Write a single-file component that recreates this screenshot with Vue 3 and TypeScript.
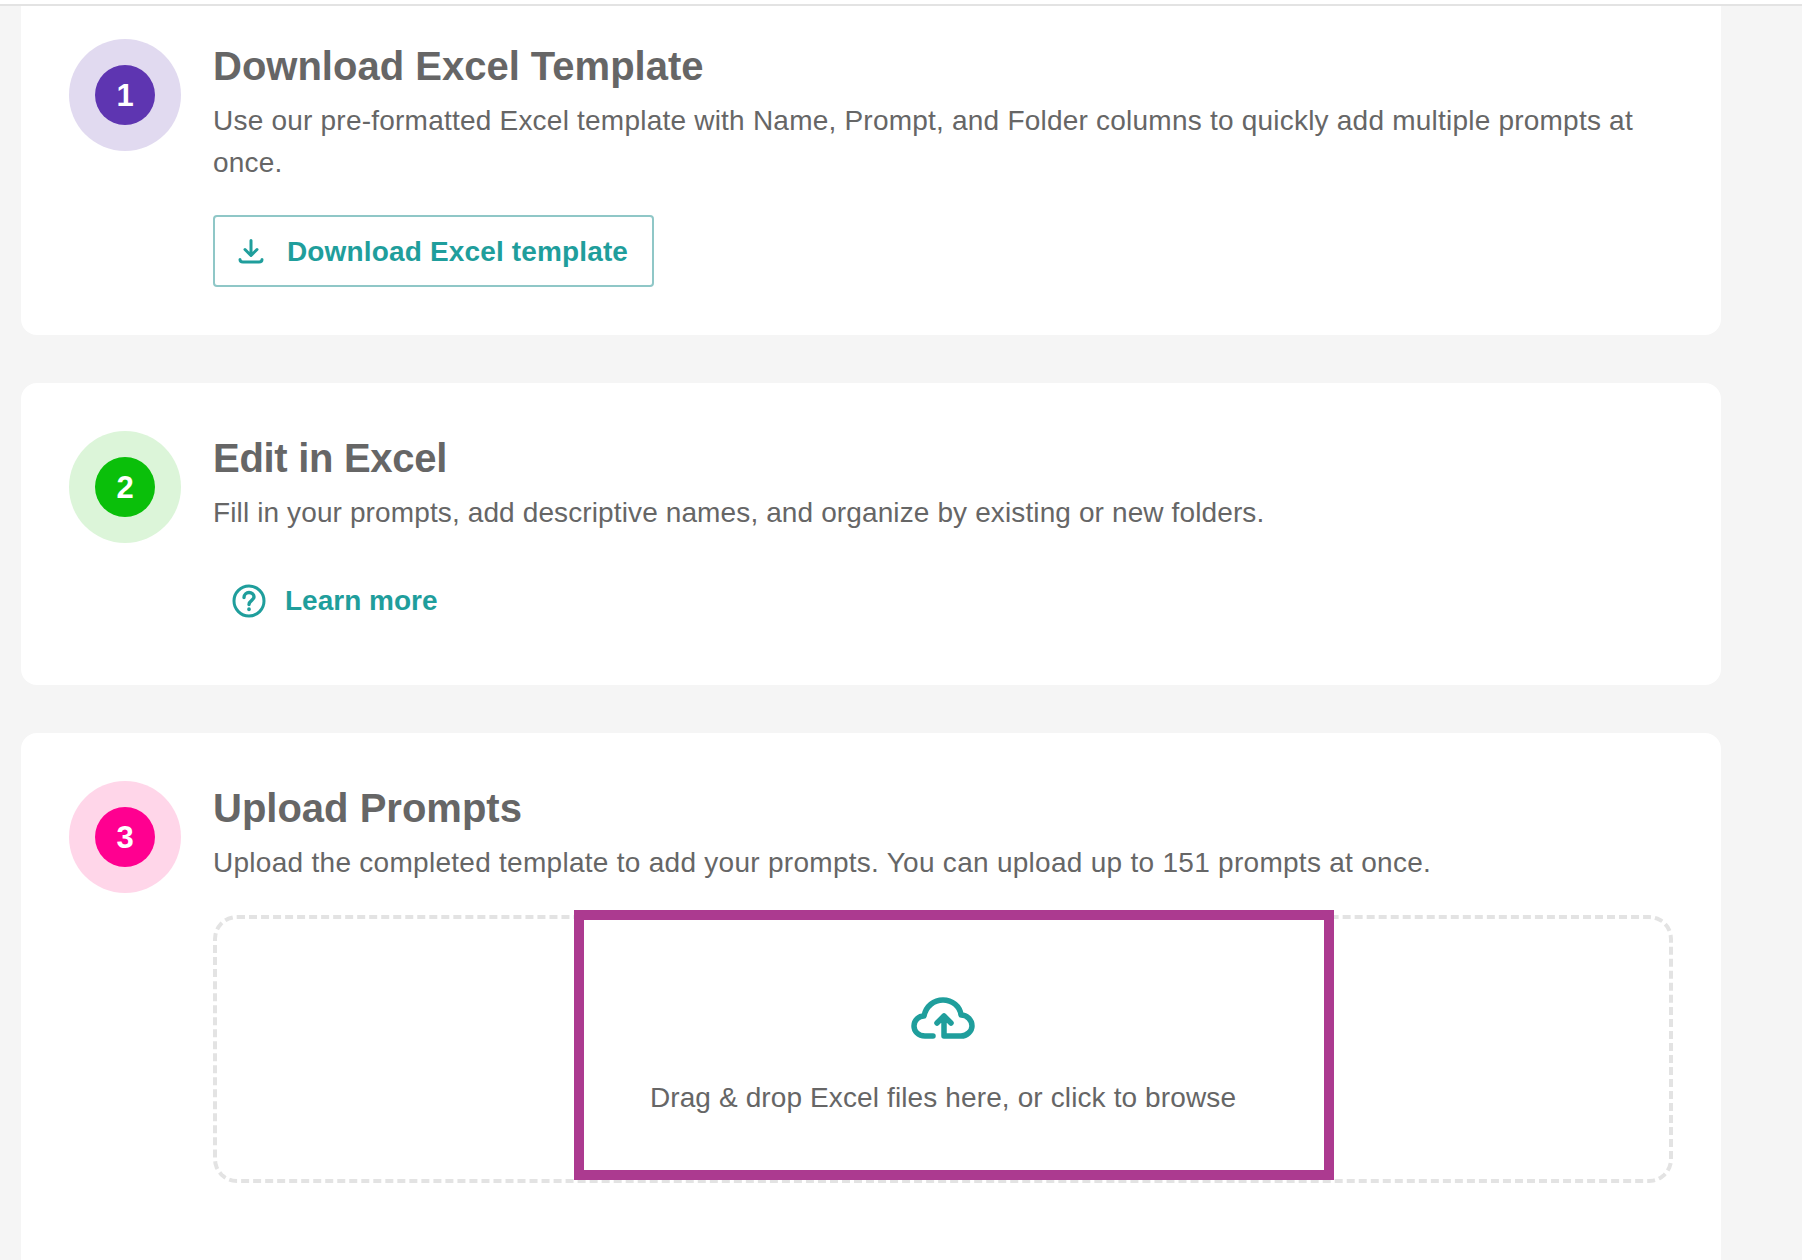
<template>
  <div class="page">
    <div class="top-line"></div>

    <section class="card first">
      <div class="step purple"><span>1</span></div>
      <div class="body">
        <h2>Download Excel Template</h2>
        <p class="wide">Use our pre-formatted Excel template with Name, Prompt, and Folder columns to quickly add multiple prompts at once.</p>
        <button class="outline-btn" type="button">
          <svg class="dl-icon" width="26" height="26" viewBox="0 0 26 26" fill="none" stroke="currentColor" stroke-width="3" stroke-linecap="round" stroke-linejoin="round">
            <path d="M13 2.5V17M7 11.5L13 17.5L19 11.5" />
            <path d="M2 21.5C2 23.5 3.5 24 5 24H21C22.5 24 24 23.5 24 21.5" />
          </svg>
          Download Excel template
        </button>
      </div>
    </section>

    <section class="card">
      <div class="step green"><span>2</span></div>
      <div class="body">
        <h2 class="tight">Edit in Excel</h2>
        <p class="narrow">Fill in your prompts, add descriptive names, and organize by existing or new folders.</p>
        <a class="link-btn">
          <svg width="34" height="34" viewBox="0 0 34 34" fill="none" stroke="currentColor" stroke-width="3" stroke-linecap="round" stroke-linejoin="round">
            <circle cx="17" cy="17" r="15" />
            <path d="M12 13.5C12 10.5 14.5 8.5 17 8.5C19.8 8.5 22 10.5 22 13C22 16.2 17 16.5 17 20.5" stroke-width="3.4" />
            <path d="M17 25V25.4" stroke-width="3.6" />
          </svg>
          Learn more
        </a>
      </div>
    </section>

    <section class="card last">
      <div class="step pink"><span>3</span></div>
      <div class="body">
        <h2>Upload Prompts</h2>
        <p class="widest">Upload the completed template to add your prompts. You can upload up to 151 prompts at once.</p>
        <div class="dropzone">
          <svg class="cloud" width="64" height="42" viewBox="0 0 64 42" fill="none" stroke="currentColor" stroke-width="5.5" stroke-linecap="round" stroke-linejoin="round">
            <path d="M22 39H14C7 39 3 34 3 29C3 23 8 19 13 19C15 9 23 3 32 3C41 3 49 9 50 18C56 18 61 23 61 29C61 34 56 39 50 39H33V19M26 26L33 19L40 26" />
          </svg>
          <span class="drop-text">Drag &amp; drop Excel files here, or click to browse</span>
          <div class="highlight"></div>
        </div>
      </div>
    </section>
  </div>
</template>

<script setup lang="ts">
</script>

<style>
html, body {
  margin: 0;
  overflow: hidden;
  background: #f5f5f5;
}
</style>

<style scoped>
.page {
  height: 1260px;
  overflow: hidden;
  padding: 0 81px 0 21px;
  box-sizing: border-box;
  background: #f5f5f5;
  font-family: "Liberation Sans", Arial, sans-serif;
  color: #666;
}

.top-line {
  height: 6px;
  margin: 0 -81px 0 -21px;
  background: #fff;
  border-bottom: 2px solid #e3e3e3;
  box-sizing: border-box;
}

.card {
  display: flex;
  gap: 32px;
  background: #fff;
  border-radius: 16px;
  padding: 48px;
  margin-bottom: 48px;
}

.card.first {
  padding-top: 33px;
  border-radius: 0 0 16px 16px;
}

.card.last {
  padding-bottom: 96px;
}

.step {
  flex: none;
  width: 112px;
  height: 112px;
  border-radius: 50%;
  display: flex;
  align-items: center;
  justify-content: center;
}

.step span {
  width: 60px;
  height: 60px;
  padding-top: 2px;
  box-sizing: border-box;
  border-radius: 50%;
  display: flex;
  align-items: center;
  justify-content: center;
  color: #fff;
  font-size: 31px;
  font-weight: 700;
}

.purple { background: #e1daf0; }
.purple span { background: #5e35b1; }
.green { background: #dcf5d9; }
.green span { background: #0abf0a; }
.pink { background: #ffd6e9; }
.pink span { background: #ff0090; }

.body {
  flex: 1;
  min-width: 0;
  padding-top: 1px;
}

h2 {
  margin: 0 0 8px;
  font-size: 40px;
  line-height: 52px;
  font-weight: 700;
}

h2.tight {
  letter-spacing: -0.3px;
}

p {
  margin: 0 0 31px;
  font-size: 28px;
  line-height: 42px;
}

p.wide {
  letter-spacing: 0.22px;
}

p.narrow {
  letter-spacing: 0.12px;
}

p.widest {
  letter-spacing: 0.28px;
}

.outline-btn {
  display: flex;
  align-items: center;
  gap: 23px;
  width: 441px;
  height: 72px;
  padding: 2px 0 0 23px;
  border: 2px solid #8fc7c7;
  border-radius: 4px;
  background: #fff;
  color: #1f9e9c;
  font-family: inherit;
  font-size: 28px;
  font-weight: 700;
  letter-spacing: 0.15px;
  box-sizing: border-box;
}

.dl-icon {
  margin-top: -2px;
}

.link-btn {
  display: flex;
  align-items: center;
  gap: 19px;
  height: 72px;
  padding: 0 0 0 19px;
  box-sizing: border-box;
  color: #1f9e9c;
  font-size: 28px;
  font-weight: 700;
}

.dropzone {
  position: relative;
  height: 268px;
  padding-top: 78px;
  box-sizing: border-box;
  border: 4px dashed #e3e3e3;
  border-radius: 24px;
  display: flex;
  flex-direction: column;
  align-items: center;
}

.cloud {
  color: #1f9e9c;
  margin-bottom: 38px;
}

.drop-text {
  font-size: 28px;
  line-height: 42px;
  letter-spacing: 0.12px;
}

.highlight {
  position: absolute;
  left: 357px;
  top: -9px;
  width: 760px;
  height: 270px;
  border: 10px solid #ac3a90;
  box-sizing: border-box;
}
</style>
